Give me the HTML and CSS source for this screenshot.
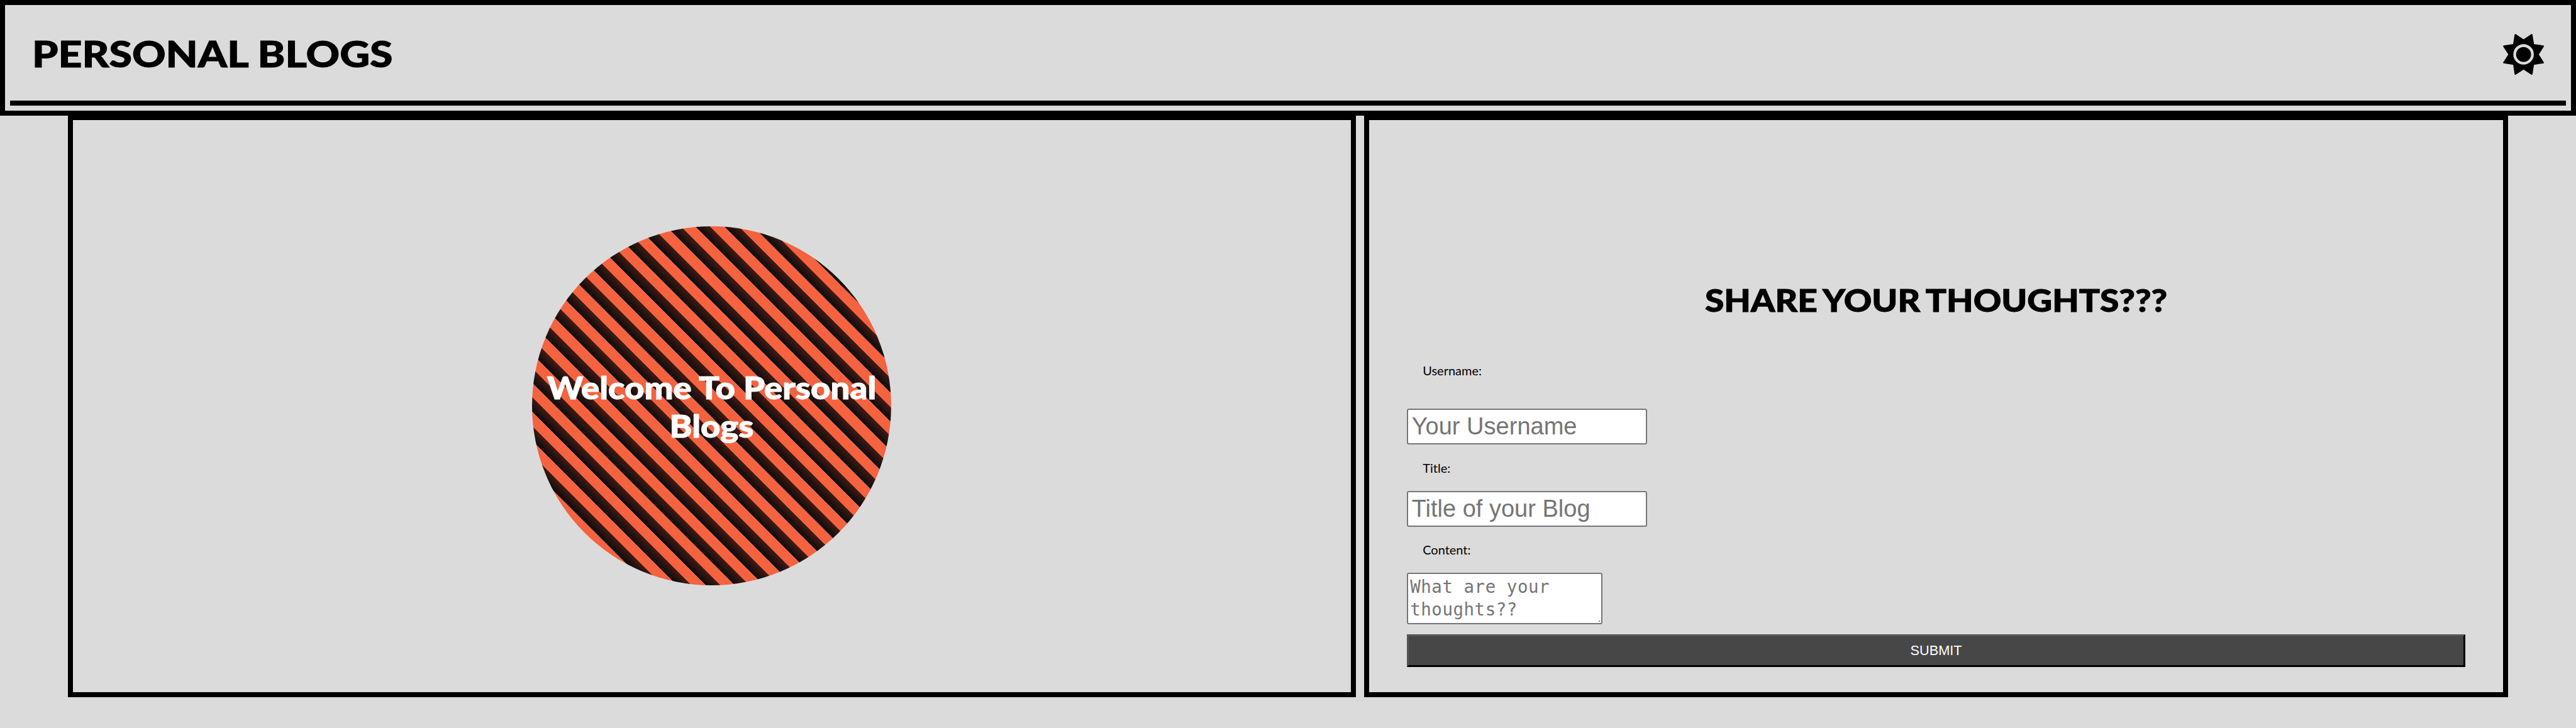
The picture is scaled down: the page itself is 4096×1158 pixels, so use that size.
FILE: index.html
```html
<!DOCTYPE html>
<html lang="en">
<head>
<meta charset="utf-8">
<title>Personal Blogs</title>
<link rel="stylesheet" href="styles.css">
</head>
<body>
<header class="header">
  <div class="header-bar">
    <h1 class="site-title">PERSONAL BLOGS</h1>
    <svg class="sun" viewBox="0 0 80 80"><path stroke="#000" stroke-width="3" stroke-linejoin="round" d="M24 1.700 40 12.300 56 1.700 59 21 78.300 24 68 40 78.300 56 59 59 56 78.300 40 67.700 24 78.300 21 59 1.700 56 12 40 1.700 24 21 21Z"/><circle cx="40" cy="40" r="17.300" fill="#000" stroke="#dbdbdb" stroke-width="5.300"/></svg>
  </div>
</header>
<main class="main">
  <section class="panel welcome">
    <div class="circle"><h2 class="circle-text">Welcome To Personal<br>Blogs</h2></div>
  </section>
  <section class="panel share">
    <h2 class="share-title">SHARE YOUR THOUGHTS???</h2>
    <form class="form">
      <label class="label label-user" for="username">Username:</label>
      <input class="input" id="username" placeholder="Your Username">
      <label class="label" for="title">Title:</label>
      <input class="input" id="title" placeholder="Title of your Blog">
      <label class="label" for="content">Content:</label>
      <textarea class="textarea" id="content" placeholder="What are your thoughts??"></textarea>
      <button class="submit" type="button">SUBMIT</button>
    </form>
  </section>
</main>
</body>
</html>
```
FILE: styles.css
```css
:root { --u: calc(100vw / 5024); }
* { box-sizing: border-box; }
html, body { margin: 0; height: 100%; overflow: hidden; }
body { background: #dbdbdb; color: #000; font-family: "Gill Sans", "Gill Sans MT", Lato, sans-serif; }
h1, h2 { margin: 0; font-weight: 900; white-space: nowrap; -webkit-text-stroke: calc(1.200 * var(--u)) currentColor; }

.header { height: calc(226 * var(--u)); border: calc(10 * var(--u)) solid #000; padding: calc(10 * var(--u)); }
.header-bar { height: calc(186 * var(--u)); border-bottom: calc(10 * var(--u)) solid #000; padding: 0 calc(42 * var(--u)) calc(4 * var(--u)) calc(43 * var(--u)); display: flex; align-items: center; justify-content: space-between; }
.site-title { font-size: calc(69.500 * var(--u)); line-height: 1; padding-bottom: calc(2 * var(--u)); transform: scaleX(1.168); transform-origin: 0 50%; }
.sun { width: calc(80 * var(--u)); height: calc(80 * var(--u)); overflow: visible; }

.main { display: flex; gap: calc(16 * var(--u)); margin: calc(-2 * var(--u)) calc(132 * var(--u)) 0; height: calc(1136 * var(--u)); }
.panel { border: calc(10 * var(--u)) solid #000; }
.welcome { width: calc(2512 * var(--u)); display: flex; align-items: center; justify-content: center; }
.share { width: calc(2232 * var(--u)); padding: 0 calc(74 * var(--u)); }

.circle { width: calc(700 * var(--u)); height: calc(700 * var(--u)); border-radius: 50%; display: flex; align-items: center; justify-content: center; background: repeating-linear-gradient(45deg, #0b0b0b 0, #431b13 calc(20 * var(--u)), #f4623f calc(20 * var(--u)), #f4623f calc(40 * var(--u))); }
.circle-text { color: #fff; text-align: center; font-size: calc(61 * var(--u)); line-height: calc(74 * var(--u)); padding-top: calc(2 * var(--u)); transform: scaleX(1.098); }

.share-title { margin-top: calc(315 * var(--u)); height: calc(74 * var(--u)); line-height: calc(74 * var(--u)); font-size: calc(61 * var(--u)); text-align: center; word-spacing: calc(-3 * var(--u)); transform: scaleX(1.107); }
.form { display: flex; flex-direction: column; align-items: flex-start; margin-top: calc(85 * var(--u)); }
.label { height: calc(30 * var(--u)); line-height: calc(30 * var(--u)); margin: calc(30 * var(--u)) 0 calc(30 * var(--u)) calc(31 * var(--u)); font-size: calc(24.500 * var(--u)); }
.label-user { margin: 0 0 calc(60 * var(--u)) calc(31 * var(--u)); }
.input, .textarea { display: block; margin: 0; border: 2px solid #767676; border-radius: calc(4 * var(--u)); background: #fff; outline: 0; }
.input { width: calc(468 * var(--u)); height: calc(70 * var(--u)); padding: 0 calc(7 * var(--u)); font: calc(46.670 * var(--u)) "Liberation Sans", Arial, sans-serif; }
.textarea { width: calc(382 * var(--u)); height: calc(100 * var(--u)); padding: calc(3 * var(--u)) calc(4 * var(--u)); font: calc(33.700 * var(--u))/calc(44 * var(--u)) "DejaVu Sans Mono", monospace; letter-spacing: calc(0.650 * var(--u)); overflow: hidden; resize: none; background: #fff linear-gradient(135deg, #bbb, #444) no-repeat right calc(2 * var(--u)) bottom calc(2 * var(--u)) / calc(3 * var(--u)) calc(3 * var(--u)); }
.input::placeholder, .textarea::placeholder { color: #757575; opacity: 1; }
.submit { width: 100%; height: calc(64 * var(--u)); margin-top: calc(20 * var(--u)); padding: 0; border: calc(4 * var(--u)) solid; border-color: #555 #000 #000 #555; background: #474747; color: #fff; font: calc(26.670 * var(--u)) "Liberation Sans", Arial, sans-serif; }
```
